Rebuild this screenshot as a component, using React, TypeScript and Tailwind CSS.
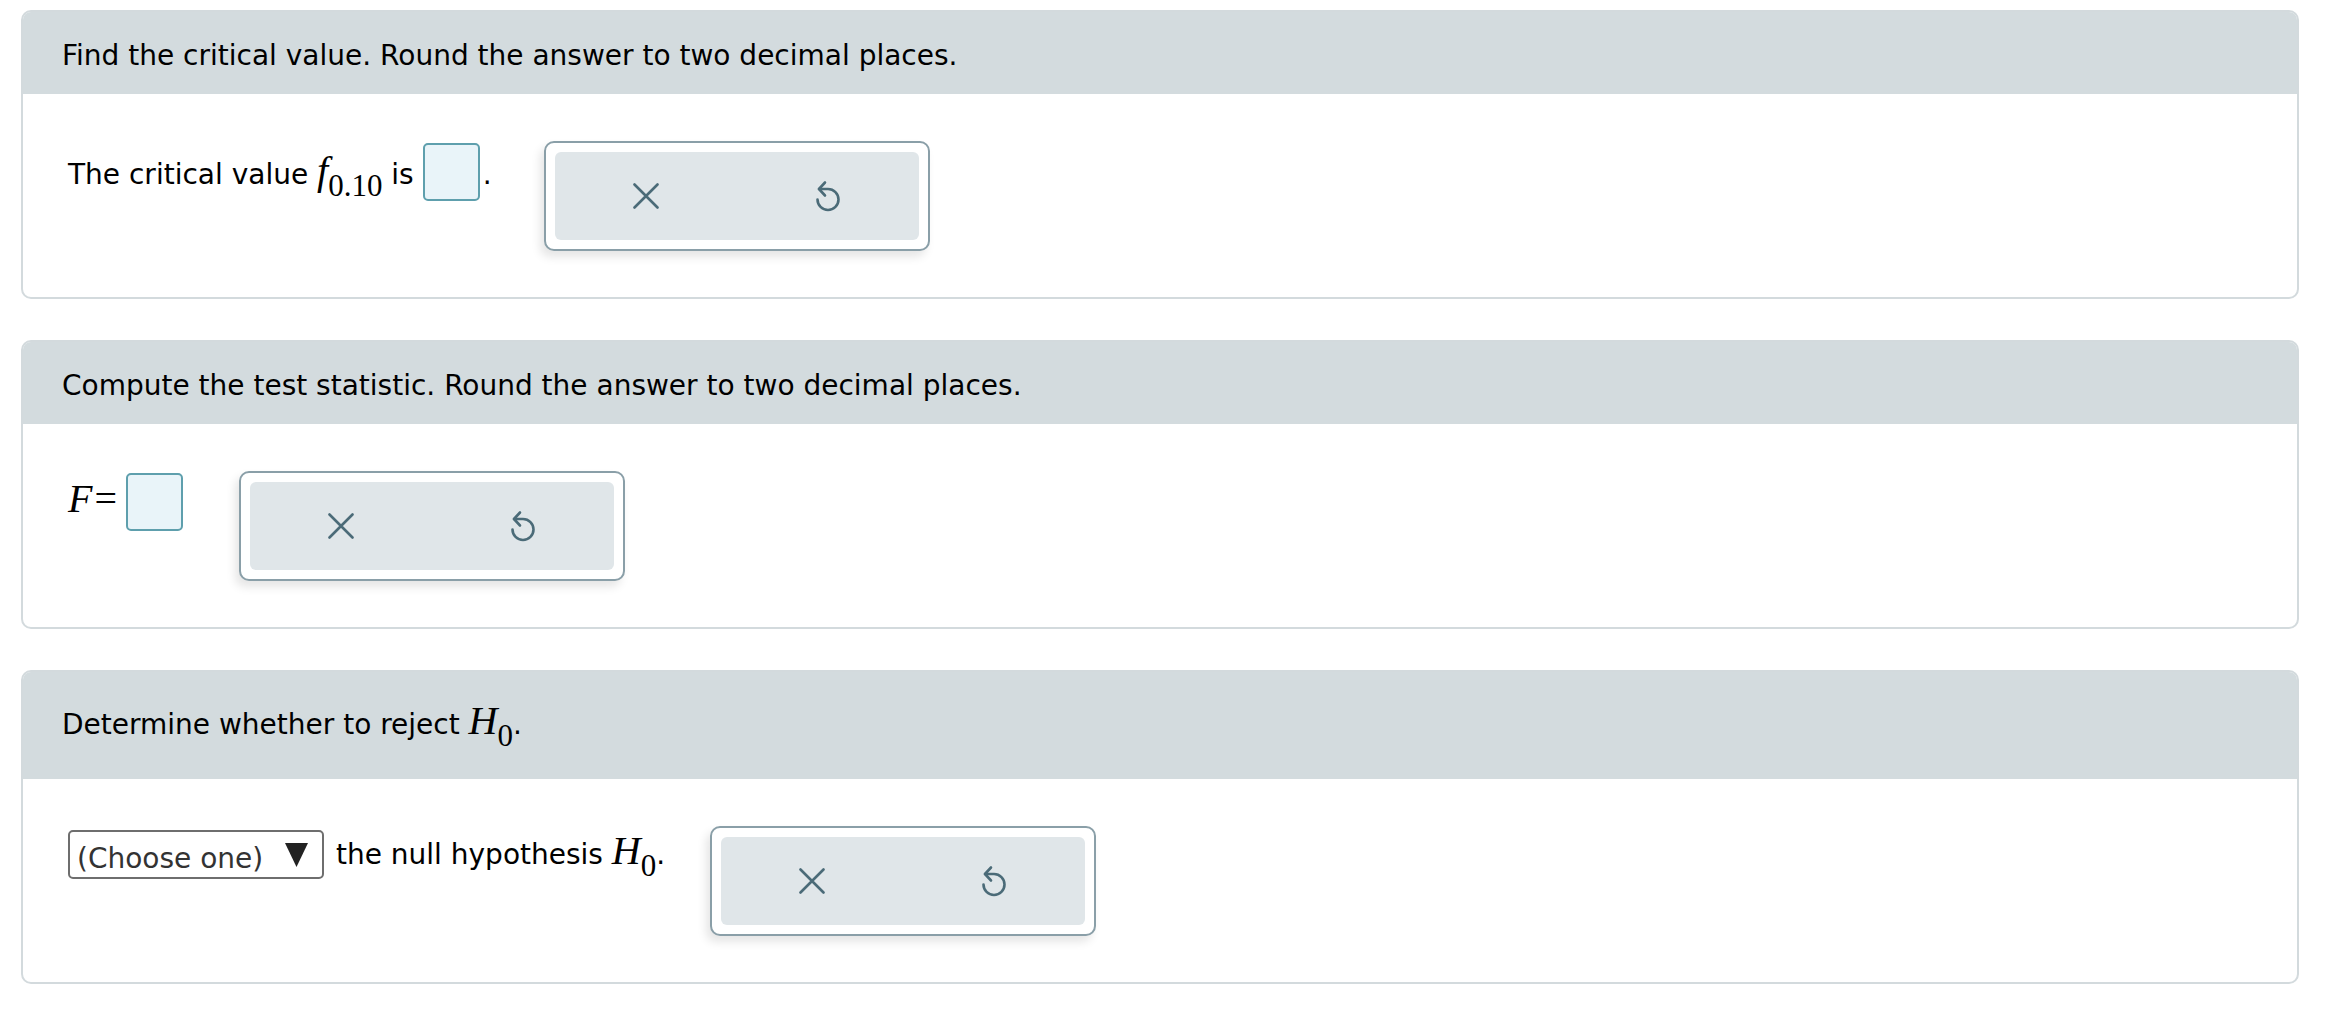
import React from 'react';

const mathFont = "font-['Liberation_Serif','Times_New_Roman',serif]";

// italic math identifier with optional subscript
const MathVar: React.FC<{ v: string; sub?: string }> = ({ v, sub }) => (
  <span className={`${mathFont} whitespace-nowrap`}>
    <span className="italic text-[40px]">{v}</span>
    {sub && <span className="text-[31px] align-[-12px]">{sub}</span>}
  </span>
);

// empty answer box
const AnswerBox: React.FC<{ className?: string }> = ({ className = '' }) => (
  <span
    className={`inline-block w-[57px] h-[58px] rounded-[5px] border-2 border-[#5e9fad] bg-[#e9f4f9] ${className}`}
  />
);

const XIcon = () => (
  <svg width="26" height="26" viewBox="0 0 26 26" fill="none" stroke="#4b6b78" strokeWidth="2.6" strokeLinecap="round">
    <path d="M1.5 1.5 L24.5 24.5 M24.5 1.5 L1.5 24.5" />
  </svg>
);

const UndoIcon = () => (
  <svg width="28" height="36" viewBox="0 0 28 36" fill="none" stroke="#4b6b78" strokeWidth="2.6" strokeLinecap="round" strokeLinejoin="round">
    <path d="M5 11 H14 A10.5 10.5 0 1 1 3.5 21.5" />
    <path d="M11 4.5 L5 11 L11 17.5" />
  </svg>
);

const Toolbar: React.FC<{ className?: string }> = ({ className = '' }) => (
  <div
    className={`w-[386px] h-[110px] shrink-0 rounded-[10px] border-2 border-[#8a9fa8] bg-white p-[9px] shadow-[-4px_6px_10px_rgba(0,0,0,0.10)] ${className}`}
  >
    <div className="flex h-full rounded-[6px] bg-[#e0e6e9]">
      <button className="flex-1 flex items-center justify-center">
        <XIcon />
      </button>
      <button className="flex-1 flex items-center justify-center">
        <UndoIcon />
      </button>
    </div>
  </div>
);

const Panel: React.FC<{ header: React.ReactNode; headerCls: string; children: React.ReactNode }> = ({
  header,
  headerCls,
  children,
}) => (
  <div className="rounded-[10px] border-2 border-[#d3dadd] overflow-hidden bg-white">
    <div className={`bg-[#d3dbde] ${headerCls} flex items-center pl-[39px] leading-none whitespace-nowrap`}>{header}</div>
    <div className="pt-[47px] pb-[46px] pl-[45px]">{children}</div>
  </div>
);

export default function App() {
  return (
    <div className="min-h-screen bg-white pt-[10px] pl-[21px] pr-[31px] flex flex-col gap-[41px] text-[28px] text-black font-['DejaVu_Sans',Verdana,sans-serif]">
      {/* critical value */}
      <Panel headerCls="h-[82px] pt-[5px]" header={<span>Find the critical value. Round the answer to two decimal places.</span>}>
        <div className="flex items-start">
          <div className="mt-[2px] leading-none whitespace-nowrap">
            The critical value <MathVar v="f" sub="0.10" /> is
            <AnswerBox className="ml-[9px] align-[-17px]" />
            <span className="ml-[3px]">.</span>
          </div>
          <Toolbar className="ml-[52px]" />
        </div>
      </Panel>

      {/* test statistic */}
      <Panel headerCls="h-[82px] pt-[5px]" header={<span>Compute the test statistic. Round the answer to two decimal places.</span>}>
        <div className="flex items-start">
          <div className="mt-[2px] leading-none whitespace-nowrap">
            <MathVar v="F" />
            <span className={`${mathFont} text-[40px] ml-[2px]`}>=</span>
            <AnswerBox className="ml-[9px] align-[-19px]" />
          </div>
          <Toolbar className="ml-[56px]" />
        </div>
      </Panel>

      {/* decision */}
      <Panel
        headerCls="h-[107px]"
        header={
          <span>
            Determine whether to reject <MathVar v="H" sub="0" />.
          </span>
        }
      >
        <div className="flex items-start">
          <div className="mt-[4px] w-[256px] h-[49px] shrink-0 flex items-center justify-between rounded-[5px] border-2 border-[#6e6e6e] pl-[7px] pr-[14px] text-[#333] leading-none">
            <span className="mt-[8px]">(Choose one)</span>
            <svg width="23" height="24" viewBox="0 0 23 24">
              <polygon points="0,0 23,0 11.5,24" fill="#222" />
            </svg>
          </div>
          <div className="ml-[12px] mt-[5px] leading-none whitespace-nowrap">
            the null hypothesis <MathVar v="H" sub="0" />.
          </div>
          <Toolbar className="ml-[45px]" />
        </div>
      </Panel>
    </div>
  );
}
